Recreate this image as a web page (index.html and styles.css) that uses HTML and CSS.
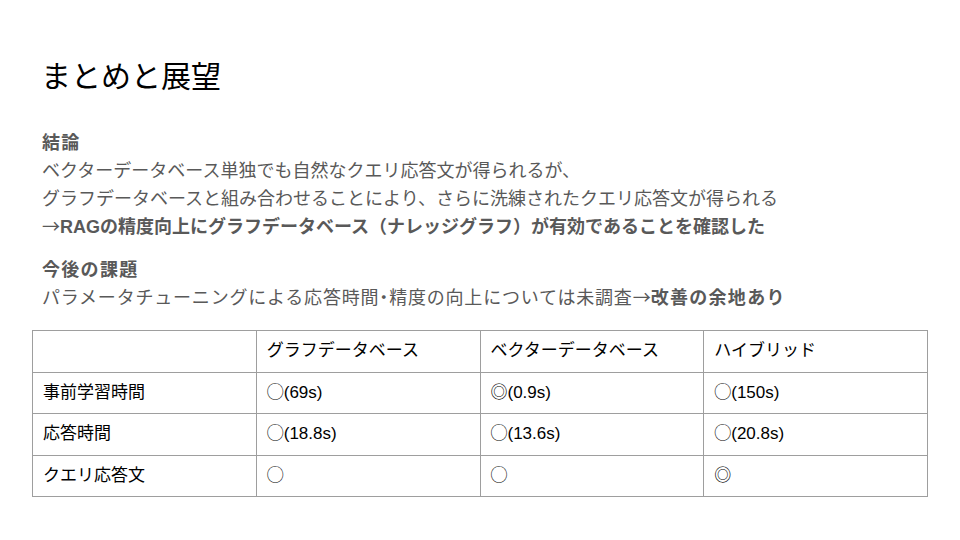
FILE: index.html
```html
<!DOCTYPE html>
<html lang="ja">
<head>
<meta charset="utf-8">
<link rel="stylesheet" href="styles.css">
</head>
<body>
<div class="slide">
  <h1 class="title">まとめと展望</h1>
  <div class="body">
    <p class="head">結論</p>
    <p>ベクターデータベース単独でも自然なクエリ応答文が得られるが、</p>
    <p>グラフデータベースと組み合わせることにより、さらに洗練されたクエリ応答文が得られる</p>
    <p class="strong"><span class="arrow">→</span><span class="latin">RAG</span>の精度向上にグラフデータベース（ナレッジグラフ）が有効であることを確認した</p>
    <p class="head gap">今後の課題</p>
    <p class="wide">パラメータチューニングによる応答時間<span class="narrow">・</span>精度の向上については未調査<span class="arrow">→</span><b>改善の余地あり</b></p>
  </div>
  <table class="grid">
    <tr><td></td><td>グラフデータベース</td><td>ベクターデータベース</td><td>ハイブリッド</td></tr>
    <tr><td>事前学習時間</td><td>◯(69s)</td><td>◎(0.9s)</td><td>◯(150s)</td></tr>
    <tr><td>応答時間</td><td>◯(18.8s)</td><td>◯(13.6s)</td><td>◯(20.8s)</td></tr>
    <tr><td>クエリ応答文</td><td>◯</td><td>◯</td><td>◎</td></tr>
  </table>
</div>
</body>
</html>
```
FILE: styles.css
```css
html, body {
  margin: 0;
  padding: 0;
  background: #ffffff;
}
.slide {
  width: 960px;
  height: 540px;
  box-sizing: border-box;
  padding: 54px 32px 0 32px;
  font-family: "Liberation Sans", "Noto Sans CJK JP", sans-serif;
}
.title {
  margin: 0 0 0 9px;
  font-size: 30px;
  font-weight: normal;
  line-height: 40px;
  color: #000000;
  font-family: "Noto Sans CJK JP", sans-serif;
}
.body {
  margin: 33px 0 0 10px;
  color: #595959;
  font-size: 18px;
  font-family: "Noto Sans CJK JP", sans-serif;
}
.body p {
  margin: 0;
  line-height: 28px;
  height: 28px;
  white-space: nowrap;
}
.body .head, .body .strong, .body b {
  font-weight: bold;
}
.body .head, .body b {
  letter-spacing: 1.3px;
}
.body .wide {
  letter-spacing: 0.8px;
}
.body .gap {
  margin-top: 15px;
}
.arrow {
  font-weight: normal;
  letter-spacing: 0;
  line-height: 1;
}
.latin {
  font-family: "Liberation Sans", sans-serif;
  line-height: 1;
}
.narrow {
  font-feature-settings: "palt";
}
.grid {
  margin-top: 20px;
  border-collapse: collapse;
  width: 896px;
  table-layout: fixed;
  color: #000000;
  font-size: 17px;
}
.grid td {
  border: 1px solid #9e9e9e;
  height: 41.5px;
  box-sizing: border-box;
  padding: 0 10px;
  vertical-align: middle;
  line-height: 20px;
}
```
